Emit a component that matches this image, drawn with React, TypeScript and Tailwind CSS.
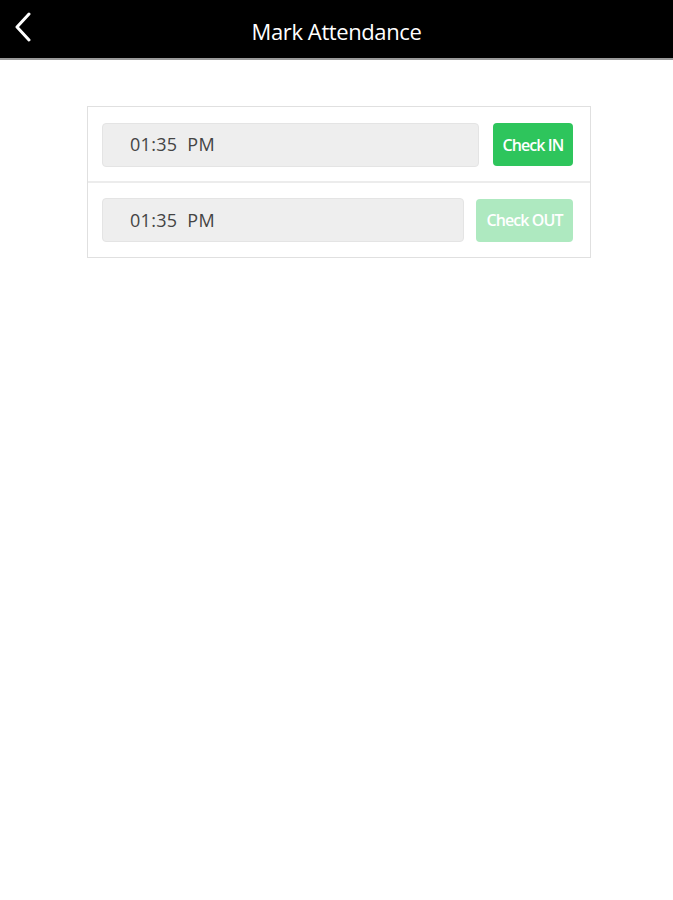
import React from "react";

export default function App() {
  return (
    <div className="w-[673px] h-[900px] bg-white" style={{ fontFamily: '"Open Sans", "Noto Sans", sans-serif' }}>
      <div className="relative h-[60px] bg-black flex items-center justify-center border-b-2 border-[#9a9a9a]">
        <svg className="absolute left-[12px] top-[12px]" width="22" height="30" viewBox="0 0 22 30">
          <path d="M17 2 L5 15 L17 28" fill="none" stroke="#fff" strokeWidth="3" strokeLinecap="round" strokeLinejoin="round" />
        </svg>
        <span className="text-white text-[22px] tracking-[-0.4px] leading-none mt-[4px]">Mark Attendance</span>
      </div>
      <div className="ml-[87px] mt-[46px] w-[504px] border border-[#e0e0e0]">
        <div className="flex items-center h-[76px] pl-[14px] pr-[17px] border-b-2 border-[#ececec]">
          <div className="w-[377px] h-[44px] mt-[1px] rounded-[4px] bg-[#eeeeee] border border-[#e4e4e4] flex items-center pl-[27px] text-[18px] text-[#444] tracking-[0.3px]">
            01:35&nbsp; PM
          </div>
          <div className="ml-auto w-[80px] h-[43px] mt-[1px] rounded-[4px] bg-[#2ec55c] flex items-center justify-center text-white text-[16px] font-semibold tracking-[-0.9px]">
            Check IN
          </div>
        </div>
        <div className="flex items-center h-[74px] pl-[14px] pr-[17px]">
          <div className="w-[362px] h-[44px] rounded-[4px] bg-[#eeeeee] border border-[#e4e4e4] flex items-center pl-[27px] text-[18px] text-[#444] tracking-[0.3px]">
            01:35&nbsp; PM
          </div>
          <div className="ml-auto w-[97px] h-[43px] rounded-[4px] bg-[#aee9c0] flex items-center justify-center text-white text-[16px] font-semibold tracking-[-0.9px]">
            Check OUT
          </div>
        </div>
      </div>
    </div>
  );
}
